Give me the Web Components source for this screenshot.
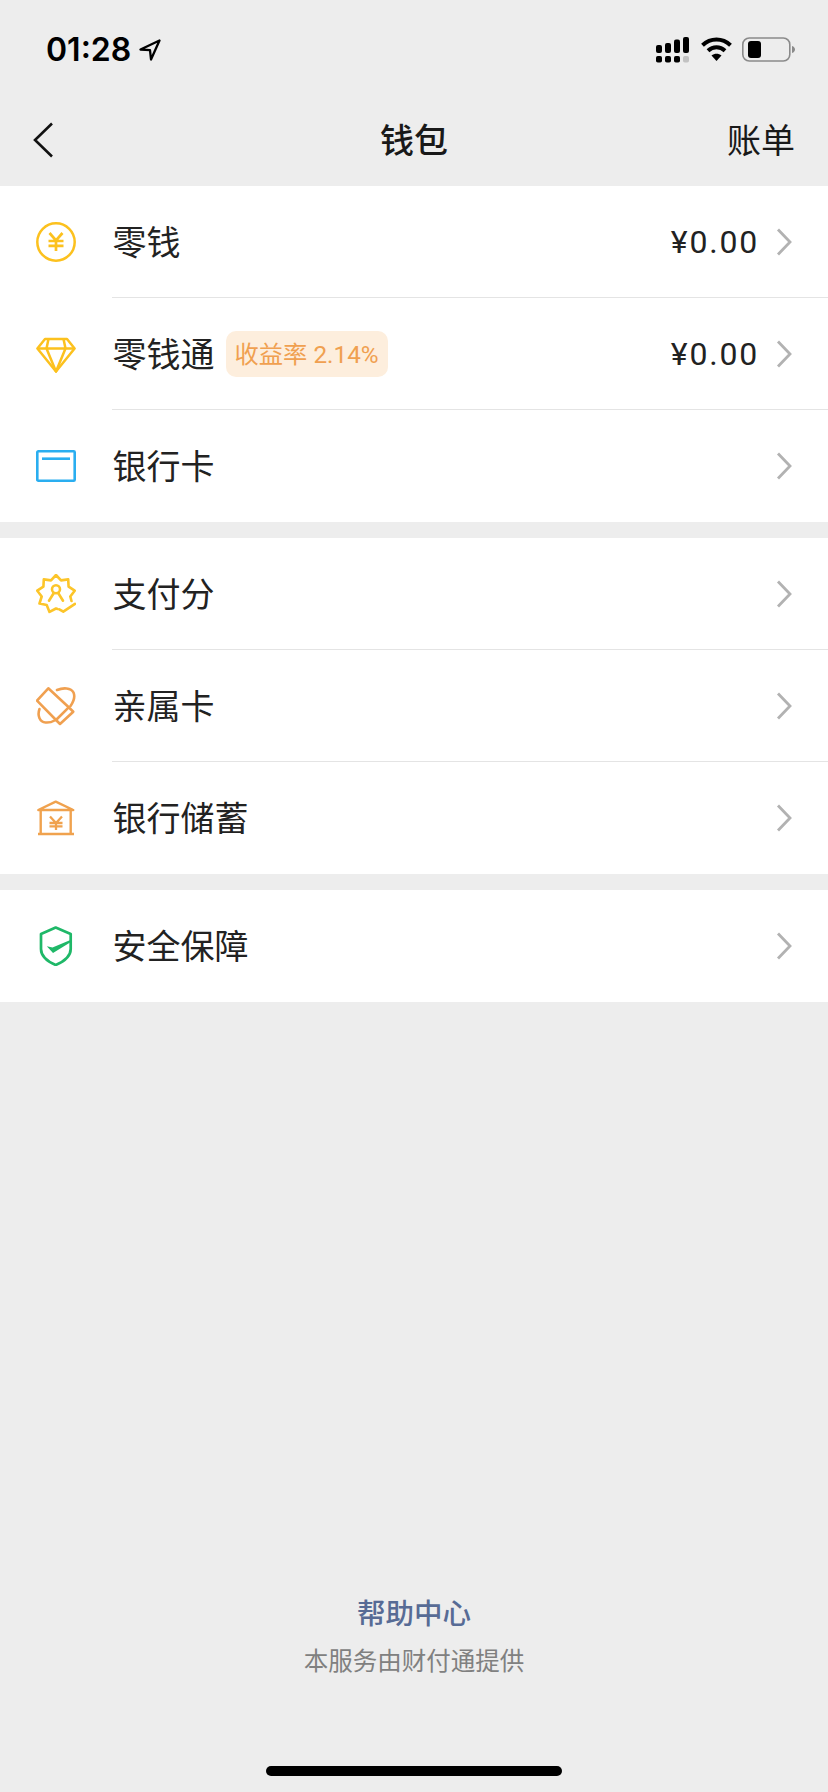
<!DOCTYPE html>
<html lang="zh-CN">
<head>
<meta charset="utf-8">
<title>钱包</title>
<style>
  html, body { margin: 0; padding: 0; background: #ededed; }
  body { font-family: "Noto Sans CJK SC", "Liberation Sans", sans-serif; }
</style>
</head>
<body>
<wallet-page>
  <wallet-status-bar slot="top" time="01:28"></wallet-status-bar>
  <wallet-nav-bar slot="top" action="账单">钱包</wallet-nav-bar>

  <wallet-section>
    <wallet-row>
      <svg slot="icon" width="40" height="40" viewBox="0 0 40 40" fill="none" stroke="#fcc11e" stroke-width="2.500">
        <circle cx="20" cy="20" r="18.700"/>
        <path d="M13.500 11l6.500 7.500 6.500-7.500M12.500 19h15M12.500 23.800h15M20 18.500V29" stroke-width="2.700"/>
      </svg>
      零钱
      <span slot="value">¥0.00</span>
    </wallet-row>
    <wallet-row>
      <svg slot="icon" width="40" height="40" viewBox="0 0 40 40" fill="none" stroke="#fcc11e" stroke-width="2.500" stroke-linejoin="round">
        <path d="M9 5h22l7.600 9.500L20 37.500 1.400 14.500z"/>
        <path d="M1.400 14.500h37.200M12.500 5l-2 9.500L20 37.500l9.500-23L27.500 5"/>
      </svg>
      零钱通
      <wallet-tag slot="tag">收益率 2.14%</wallet-tag>
      <span slot="value">¥0.00</span>
    </wallet-row>
    <wallet-row last>
      <svg slot="icon" width="40" height="40" viewBox="0 0 40 40" fill="none" stroke="#2aaef0" stroke-width="2.600">
        <rect x="1.300" y="5.300" width="37.400" height="29.400" rx="1"/>
        <path d="M6 12.700h28"/>
      </svg>
      银行卡
    </wallet-row>
  </wallet-section>

  <wallet-section>
    <wallet-row>
      <svg slot="icon" width="40" height="40" viewBox="0 0 40 40" fill="none" stroke="#fcc52a" stroke-width="2.600" stroke-linejoin="round" stroke-linecap="round">
        <path d="M35.500 27l-1.200-4.500 4.400-5.800-6.100-4-.4-7.300-7.200 1L20 1l-5 5.400-7.200-1-.4 7.300-6.100 4 4.400 5.800-2.200 7 7.200 1.600 2.800 6.800 6.500-3.400 1.500.5"/>
        <circle cx="20" cy="15.300" r="4"/>
        <path d="M17.500 19.500L13 26.700M22.500 19.500L27 26.700"/>
        <path d="M23.300 35.300l4 2.400L39 29.800"/>
      </svg>
      支付分
    </wallet-row>
    <wallet-row>
      <svg slot="icon" width="40" height="40" viewBox="0 0 40 40" fill="none" stroke="#f0a050" stroke-width="2.600" stroke-linejoin="round" stroke-linecap="round">
        <path d="M12.300 2.300L1 14.700 20 34l12.700-12.700z"/>
        <path d="M32.700 21.300l4.600 4.400L24 38l-4-4"/>
        <path d="M21 4c6-2.500 14-2.500 16.500 2.500 1.500 3.500.5 8.500-3 13.500"/>
        <path d="M3.500 23c-2.500 7 .5 13 6 13.500 3.500.3 6.500-.5 9-2"/>
      </svg>
      亲属卡
    </wallet-row>
    <wallet-row last>
      <svg slot="icon" width="40" height="40" viewBox="0 0 40 40" fill="none" stroke="#f0a24e" stroke-width="2.400">
        <path d="M2.300 12L19.700 3.700 37.300 12z" stroke-linejoin="round"/>
        <path d="M4.700 12v24M34.700 12v24M2 36h36"/>
        <path d="M14 18.500l6 6.500 6-6.500M13.500 25h13M13.500 28.300h13M20 24.500V32" stroke-width="2.300"/>
      </svg>
      银行储蓄
    </wallet-row>
  </wallet-section>

  <wallet-section>
    <wallet-row last>
      <svg slot="icon" width="40" height="40" viewBox="0 0 40 40" fill="none" stroke="#1fb868" stroke-width="2.700" stroke-linejoin="round">
        <path d="M19.700 1.500L5 8v15c0 7 6.500 12.500 14.700 16C28 35.500 34.700 30 34.700 23V8z"/>
        <path d="M10.800 20.300l5.700 1.200L33.800 14.300l.7 1.900L17 27z" fill="#1fb868" stroke="none"/>
      </svg>
      安全保障
    </wallet-row>
  </wallet-section>

  <wallet-footer slot="bottom" note="本服务由财付通提供">帮助中心</wallet-footer>
</wallet-page>

<script>
(function () {
    'use strict';

    class WalletPage extends HTMLElement {
        constructor() {
            super();
            this.attachShadow({ mode: 'open' }).innerHTML = `<style>
                :host { display: flex; flex-direction: column; height: 1792px; background: #ededed; }
                .list { display: flex; flex-direction: column; gap: 16px; }
                .bottom { margin-top: auto; }
            </style>
            <slot name="top"></slot>
            <div class="list"><slot></slot></div>
            <div class="bottom"><slot name="bottom"></slot></div>`;
        }
    }

    class WalletStatusBar extends HTMLElement {
        constructor() {
            super();
            this.attachShadow({ mode: 'open' }).innerHTML = `<style>
                :host { display: flex; align-items: center; height: 88px; box-sizing: border-box; padding: 12px 33px 0 46px; color: #000; }
                .time { font: 600 32px/1 Inter, "Liberation Sans", sans-serif; }
                .arrow { margin-left: 8px; margin-top: -1px; }
                .right { margin-left: auto; display: flex; align-items: center; }
                svg { display: block; }
            </style>
            <span class="time"></span>
            <svg class="arrow" width="22" height="22" viewBox="0 0 22 22" fill="none" stroke="#000" stroke-width="2.300" stroke-linejoin="round">
                <path d="M20.500 1.500L1.500 10.500l9.500.6 1 9.400z"/>
            </svg>
            <div class="right">
                <svg width="140" height="26" viewBox="654 37 140 26">
                    <g fill="#000">
                        <rect x="655" y="45" width="6" height="8" rx="2"/>
                        <rect x="664" y="43" width="6" height="10" rx="2"/>
                        <rect x="673" y="39.500" width="6" height="13.500" rx="2"/>
                        <rect x="682" y="37" width="6" height="16" rx="2"/>
                        <rect x="655" y="56" width="6" height="6.500" rx="1.800"/>
                        <rect x="664" y="56" width="6" height="6.500" rx="1.800"/>
                        <rect x="673" y="56" width="6" height="6.500" rx="1.800"/>
                        <rect x="682" y="56" width="6" height="6.500" rx="1.800" fill="#c2c2c2"/>
                    </g>
                    <g fill="none" stroke="#000" stroke-width="4">
                        <path d="M701.500 45.200c8-7.600 20-7.600 28 0"/>
                        <path d="M707 50.700c5-4.600 12-4.600 17 0"/>
                    </g>
                    <path d="M710.500 55.500c3-2.300 7-2.300 10 0l-5 5.500z" fill="#000"/>
                    <rect x="741.800" y="38" width="47" height="23" rx="6.500" fill="none" stroke="#8a8a8a" stroke-width="1.600"/>
                    <rect x="747" y="41" width="13" height="17" rx="3" fill="#000"/>
                    <path d="M791 46c2 .6 3 2 3 3.500s-1 2.900-3 3.500z" fill="#8a8a8a"/>
                </svg>
            </div>`;
            this.shadowRoot.querySelector('.time').textContent = this.getAttribute('time');
        }
    }

    class WalletNavBar extends HTMLElement {
        constructor() {
            super();
            this.attachShadow({ mode: 'open' }).innerHTML = `<style>
                :host { display: grid; grid-template-columns: 1fr auto 1fr; align-items: center; height: 98px; box-sizing: border-box; padding: 4px 33px 0 33px; color: #191919; font-size: 34px; line-height: 48px; }
                .title { font-weight: 500; }
                .action { justify-self: end; }
                svg { display: block; margin-top: 2px; }
            </style>
            <svg width="22" height="36" viewBox="0 0 22 36" fill="none" stroke="#111" stroke-width="2.600"><path d="M19 1.500L2 18l17 16.500"/></svg>
            <span class="title"><slot></slot></span>
            <span class="action"></span>`;
            this.shadowRoot.querySelector('.action').textContent = this.getAttribute('action');
        }
    }

    class WalletSection extends HTMLElement {
        constructor() {
            super();
            this.attachShadow({ mode: 'open' }).innerHTML = `<style>
                :host { display: block; background: #fff; }
            </style>
            <slot></slot>`;
        }
    }

    class WalletRow extends HTMLElement {
        constructor() {
            super();
            this.attachShadow({ mode: 'open' }).innerHTML = `<style>
                :host { display: flex; align-items: center; height: 112px; padding-left: 36px; color: #222; font-size: 34px; }
                .icon { width: 40px; height: 40px; flex: none; margin-right: 36px; }
                .body { flex: 1; align-self: stretch; display: flex; align-items: center; padding-right: 36px; border-bottom: 1px solid #e4e4e4; }
                :host([last]) .body { border-bottom-color: transparent; }
                .label { margin: 0 0 2px 0.500px; }
                .value { margin-right: 17px; font: 32px/1 Roboto, "Liberation Sans", sans-serif; letter-spacing: 1.800px; }
                .spacer { flex: 1; }
                svg { display: block; }
                .chevron { flex: none; }
                ::slotted(svg) { display: block; }
            </style>
            <div class="icon"><slot name="icon"></slot></div>
            <div class="body">
                <span class="label"><slot></slot></span>
                <slot name="tag"></slot>
                <span class="spacer"></span>
                <span class="value"><slot name="value"></slot></span>
                <svg class="chevron" width="16" height="28" viewBox="0 0 16 28" fill="none" stroke="#b2b2b2" stroke-width="2.800"><path d="M2 1.500L14 14 2 26.500"/></svg>
            </div>`;
        }
    }

    class WalletTag extends HTMLElement {
        constructor() {
            super();
            this.attachShadow({ mode: 'open' }).innerHTML = `<style>
                :host { display: block; margin-left: 11px; padding: 0 9px; height: 46px; line-height: 47px; border-radius: 10px; background: #fdeedd; color: #f0a050; font-size: 24.300px; font-family: Roboto, "Noto Sans CJK SC", sans-serif; white-space: nowrap; }
            </style>
            <slot></slot>`;
        }
    }

    class WalletFooter extends HTMLElement {
        constructor() {
            super();
            this.attachShadow({ mode: 'open' }).innerHTML = `<style>
                :host { display: flex; flex-direction: column; align-items: center; padding-bottom: 16px; }
                .help { color: #576b95; font-size: 28.500px; line-height: 40px; font-weight: 500; }
                .note { color: #808080; font-size: 24.500px; line-height: 34px; margin-top: 11px; }
                .home { width: 296px; height: 10px; margin-top: 89px; border-radius: 5px; background: #000; }
            </style>
            <div class="help"><slot></slot></div>
            <div class="note"></div>
            <div class="home"></div>`;
            this.shadowRoot.querySelector('.note').textContent = this.getAttribute('note');
        }
    }

    window.customElements.define('wallet-page', WalletPage);
    window.customElements.define('wallet-status-bar', WalletStatusBar);
    window.customElements.define('wallet-nav-bar', WalletNavBar);
    window.customElements.define('wallet-section', WalletSection);
    window.customElements.define('wallet-row', WalletRow);
    window.customElements.define('wallet-tag', WalletTag);
    window.customElements.define('wallet-footer', WalletFooter);
})();
</script>
</body>
</html>
